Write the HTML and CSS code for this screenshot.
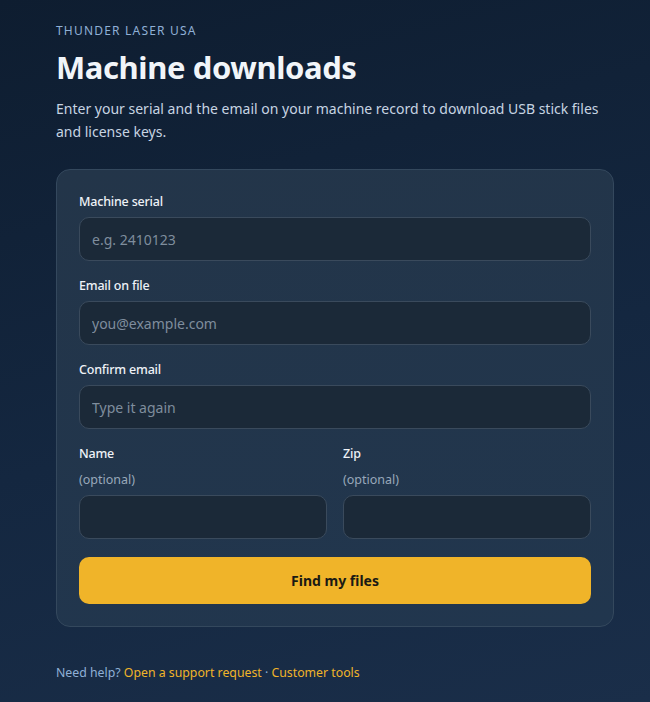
FILE: index.html
```html
<!DOCTYPE html>
<html lang="en">
<head>
<meta charset="utf-8">
<title>Machine downloads</title>
<link rel="stylesheet" href="styles.css">
</head>
<body>
<main class="page">
  <p class="eyebrow">THUNDER LASER USA</p>
  <h1 class="title">Machine downloads</h1>
  <p class="lead">Enter your serial and the email on your machine record to download USB stick files and license keys.</p>
  <form class="card">
    <div class="field">
      <label class="label" for="serial">Machine serial</label>
      <input class="input" id="serial" type="text" placeholder="e.g. 2410123">
    </div>
    <div class="field">
      <label class="label" for="email">Email on file</label>
      <input class="input" id="email" type="email" placeholder="you@example.com">
    </div>
    <div class="field">
      <label class="label" for="confirm">Confirm email</label>
      <input class="input" id="confirm" type="email" placeholder="Type it again">
    </div>
    <div class="row">
      <div class="field">
        <label class="label" for="name">Name <span class="optional">(optional)</span></label>
        <input class="input" id="name" type="text">
      </div>
      <div class="field">
        <label class="label" for="zip">Zip <span class="optional">(optional)</span></label>
        <input class="input" id="zip" type="text">
      </div>
    </div>
    <button class="button" type="button">Find my files</button>
  </form>
  <p class="help">Need help? <a href="#">Open a support request</a> · <a href="#">Customer tools</a></p>
</main>
</body>
</html>
```

FILE: styles.css
```css
* { box-sizing: border-box; }
html, body { margin: 0; height: 100%; }
body {
  background: linear-gradient(165deg, #0e1d30 0%, #142740 55%, #1a2e49 100%);
  color: #e8eef5;
  font-family: "Noto Sans", "Open Sans", sans-serif;
  min-height: 702px;
}
.page {
  width: 558px;
  margin-left: 56px;
  padding-top: 22px;
}
.eyebrow {
  margin: 0;
  font-size: 12px;
  letter-spacing: 1.2px;
  color: #8fb0d6;
  line-height: 18px;
}
.title {
  margin: 7px 0 0;
  font-size: 31px;
  font-weight: 700;
  letter-spacing: -0.4px;
  line-height: 40px;
  color: #f1f5f9;
}
.lead {
  margin: 10px 0 0;
  font-size: 14px;
  line-height: 23px;
  color: #c7d4e2;
}
.card {
  margin-top: 26px;
  background: linear-gradient(170deg, #233549 0%, #21364e 100%);
  border: 1px solid #34485d;
  border-radius: 14px;
  padding: 23px 22px 22px;
  display: flex;
  flex-direction: column;
  gap: 16px;
}
.field {
  display: flex;
  flex-direction: column;
  min-width: 0;
}
.label {
  font-size: 12.5px;
  line-height: 18px;
  font-weight: 500;
  letter-spacing: -0.2px;
  color: #eef2f7;
  margin-bottom: 6px;
}
.optional {
  display: block;
  margin-top: 8px;
  font-weight: 400;
  letter-spacing: 0;
  color: #98a8ba;
}
.input {
  height: 44px;
  width: 100%;
  background: #1b2938;
  border: 1px solid #3a4a5c;
  border-radius: 10px;
  padding: 0 12px;
  font-family: inherit;
  font-size: 14px;
  color: #e8eef5;
  outline: none;
}
.input::placeholder { color: #7f8d9d; }
.row {
  display: grid;
  grid-template-columns: 1fr 1fr;
  gap: 16px;
}
.button {
  margin-top: 2px;
  height: 47px;
  border: none;
  border-radius: 10px;
  background: #f0b429;
  color: #1a1a14;
  font-family: inherit;
  font-size: 14px;
  font-weight: 700;
  cursor: pointer;
}
.help {
  margin: 37px 0 0;
  font-size: 12.3px;
  line-height: 18px;
  color: #8fb0d6;
}
.help a {
  color: #f0b429;
  text-decoration: none;
}
```
